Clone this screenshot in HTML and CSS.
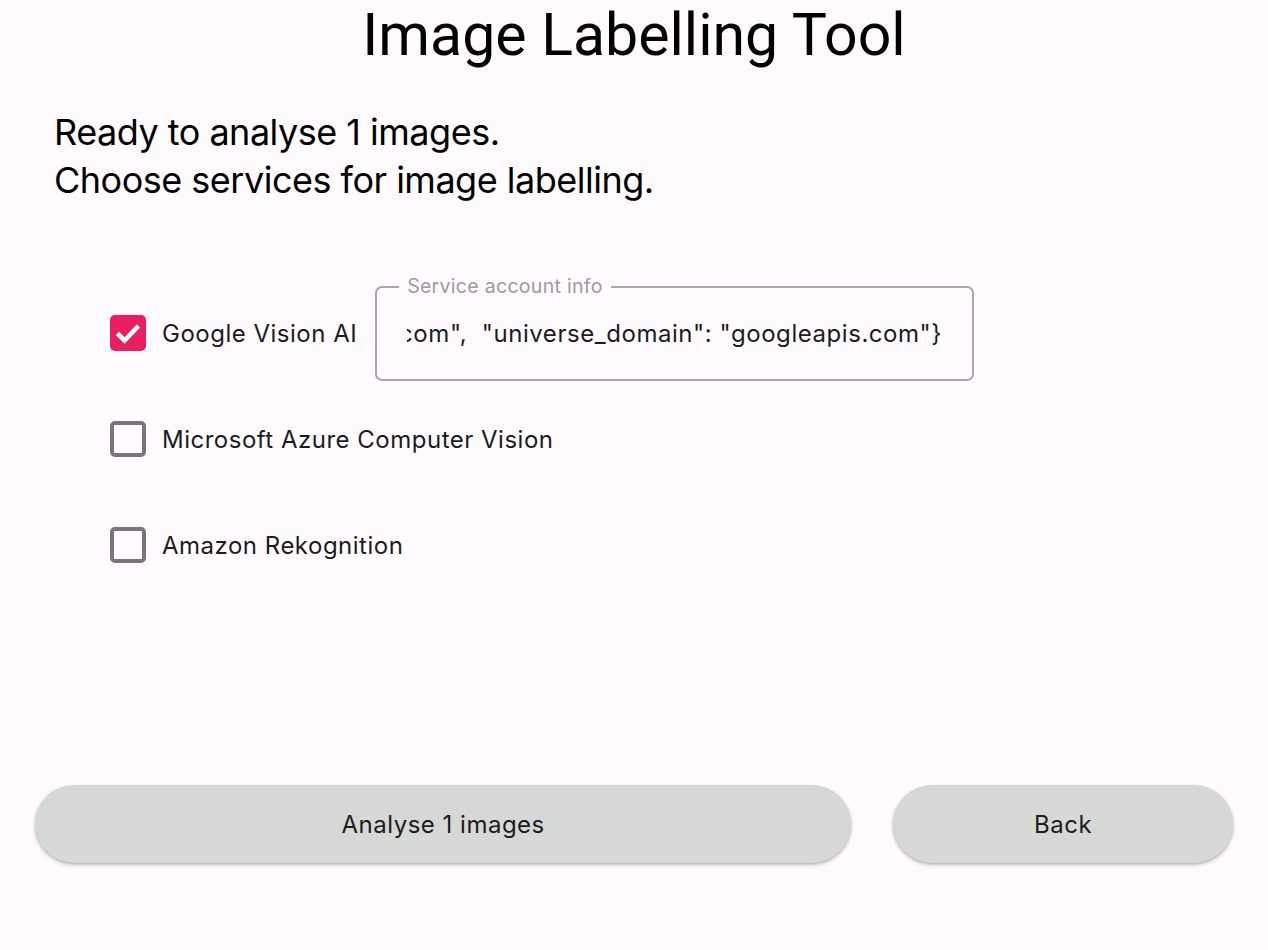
FILE: index.html
```html
<!DOCTYPE html>
<html>
<head>
<meta charset="utf-8">
<link rel="stylesheet" href="styles.css">
</head>
<body>
<div class="page">
  <h1 class="title">Image Labelling Tool</h1>
  <p class="intro">Ready to analyse 1 images.<br>Choose services for image labelling.</p>
  <div class="services">
    <div class="row">
      <span class="check checked">
        <svg viewBox="0 0 36 36" width="36" height="36"><path d="M7.5 18.5 L14.5 25.5 L28.5 11" fill="none" stroke="#fff" stroke-width="4.6"/></svg>
      </span>
      <span class="label">Google Vision AI</span>
      <div class="field">
        <span class="field-label">Service account info</span>
        <div class="field-value"><span>":"https://www.googleapis.com/robot/v1/metadata/x509/labeller%40project.iam.gserviceaccount.com",  "universe_domain": "googleapis.com"}</span></div>
      </div>
    </div>
    <div class="row">
      <span class="check"></span>
      <span class="label">Microsoft Azure Computer Vision</span>
    </div>
    <div class="row">
      <span class="check"></span>
      <span class="label">Amazon Rekognition</span>
    </div>
  </div>
  <div class="actions">
    <button class="btn btn-main">Analyse 1 images</button>
    <button class="btn btn-back">Back</button>
  </div>
</div>
</body>
</html>
```
FILE: styles.css
```css
html, body {
  margin: 0;
  padding: 0;
  background: #fffbfe;
  font-family: Inter, Roboto, "Noto Sans", sans-serif;
  color: #1c1b1f;
}
.page {
  width: 1268px;
  height: 950px;
  display: flex;
  flex-direction: column;
}
.title {
  margin: 0;
  padding-top: 2px;
  text-align: center;
  font-family: Roboto, "Noto Sans", sans-serif;
  font-weight: 400;
  font-size: 59px;
  line-height: 66px;
  color: #000;
}
.intro {
  margin: 40px 0 0 54px;
  font-size: 36px;
  line-height: 48px;
  color: #000;
  letter-spacing: -0.5px;
}
.services {
  margin-top: 111px;
  padding-left: 110px;
  display: flex;
  flex-direction: column;
  gap: 70px;
}
.row {
  display: flex;
  align-items: center;
  height: 36px;
}
.check {
  width: 36px;
  height: 36px;
  box-sizing: border-box;
  border: 4px solid #77767a;
  border-radius: 5px;
  flex: none;
}
.check.checked {
  border: none;
  background: #e91e63;
}
.check svg { display: block; }
.label {
  margin-left: 16px;
  font-size: 24px;
  letter-spacing: 0.5px;
  color: #1c1b1f;
}
.field {
  position: relative;
  margin-left: 18px;
  width: 599px;
  height: 95px;
  box-sizing: border-box;
  border: 2px solid #a9a8ac;
  border-radius: 7px;
  display: flex;
  align-items: center;
  padding: 0 30px 0 30px;
}
.field-label {
  position: absolute;
  top: -14px;
  left: 22px;
  padding: 0 8px;
  background: #fffbfe;
  font-size: 19.5px;
  color: #9c9a9f;
  letter-spacing: 0.3px;
  line-height: 24px;
}
.field-value {
  flex: 1;
  overflow: hidden;
  display: flex;
  justify-content: flex-end;
  white-space: pre;
  font-size: 24px;
  letter-spacing: 0.55px;
  color: #1c1b1f;
}
.actions {
  margin-top: auto;
  margin-bottom: 87px;
  padding: 0 35px;
  display: flex;
  gap: 42px;
}
.btn {
  height: 78px;
  border: none;
  border-radius: 39px;
  background: #d6d8d6;
  font-family: Inter, Roboto, "Noto Sans", sans-serif;
  font-size: 24px;
  letter-spacing: 0.5px;
  color: #1c1b1f;
  box-shadow: 0 2px 4px rgba(0,0,0,0.22), 0 1px 2px rgba(0,0,0,0.12);
}
.btn-main { width: 817px; }
.btn-back { width: 340px; }
```
